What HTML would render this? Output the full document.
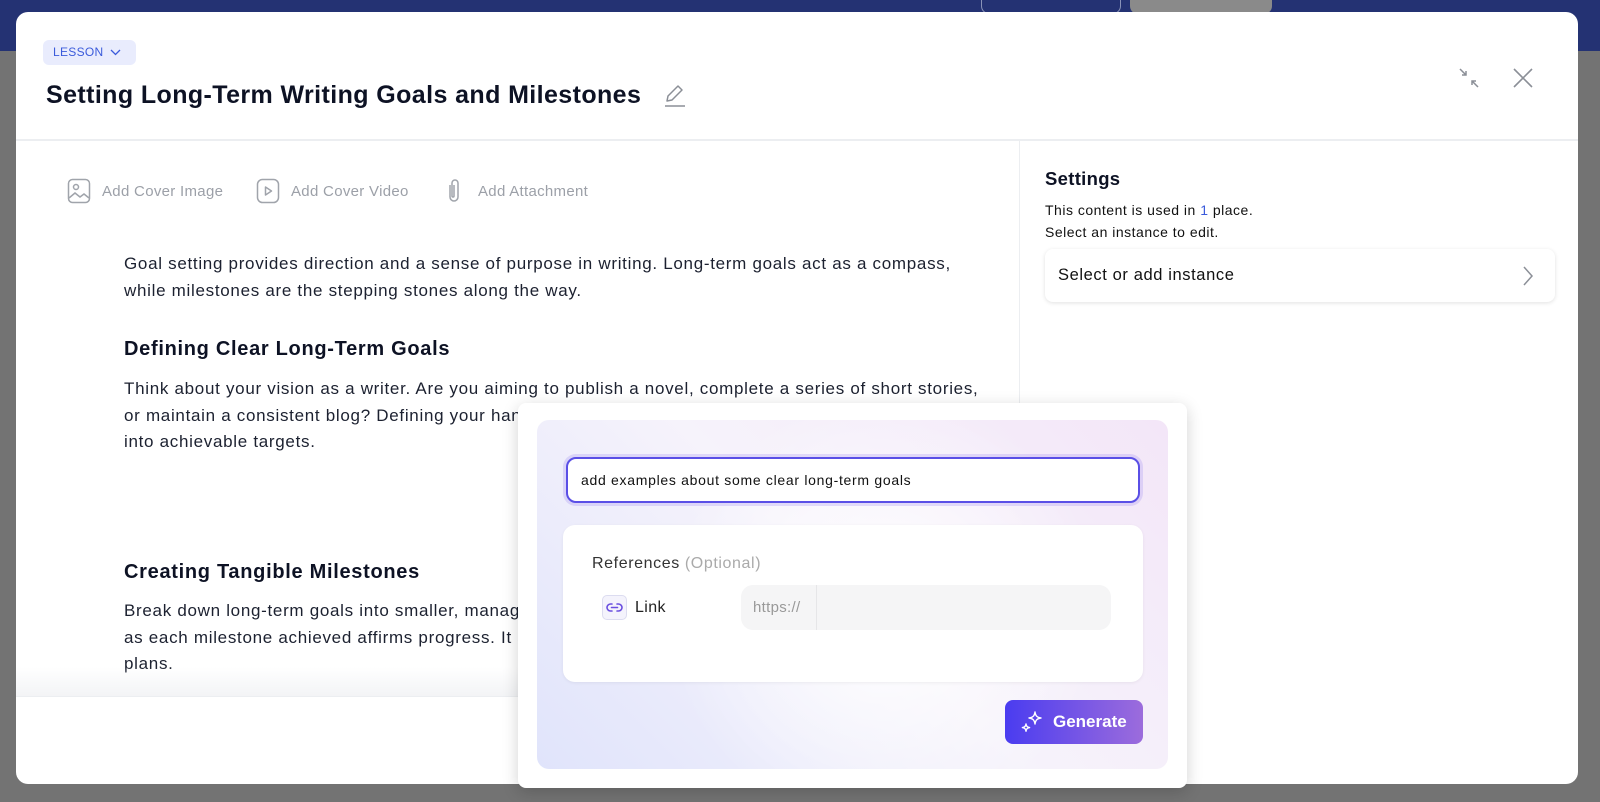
<!DOCTYPE html>
<html><head><meta charset="utf-8"><style>
*{box-sizing:border-box;margin:0;padding:0}
body{width:1600px;height:802px;overflow:hidden;position:relative;background:#6b6b6b;font-family:"Liberation Sans",sans-serif;color:#111827}
.nav{position:absolute;left:0;top:0;width:1600px;height:51px;background:#243273}
.shade{position:absolute;left:0;top:51px;width:1600px;height:751px;background:#737373}
.tab1{position:absolute;left:981px;top:-10px;width:140px;height:24px;border:1px solid #8a93b8;border-radius:8px}
.tab2{position:absolute;left:1130px;top:-10px;width:142px;height:24px;background:#8a8a8a;border-radius:8px}
.modal{position:absolute;left:16px;top:12px;width:1562px;height:772px;background:#fff;border-radius:12px;overflow:hidden}
.abs{position:absolute;white-space:nowrap}
.badge{left:27px;top:28px;width:93px;height:25px;background:#e9ecfd;border-radius:6px;color:#3b5bdb;font-size:12px;line-height:25px;padding-left:10px;letter-spacing:.3px}
.title{left:30px;top:69px;font-size:25px;font-weight:bold;color:#0d1224;letter-spacing:.4px}
.hdiv{position:absolute;left:0;top:127px;width:1562px;height:2px;background:#eceef1}
.vdiv{position:absolute;left:1003px;top:129px;width:1px;height:555px;background:#eceef1}
.cov{font-size:15px;color:#9ca0a8;top:171px;letter-spacing:.3px}
.p{font-size:17px;color:#1c2130;left:108px;line-height:26.5px;letter-spacing:.7px}
.h{font-size:20px;font-weight:bold;color:#0d1224;left:108px;letter-spacing:.7px}
.fade{position:absolute;left:0;top:655px;width:1003px;height:29px;background:linear-gradient(rgba(255,255,255,0),#f3f4f6)}
.foot{position:absolute;left:0;top:684px;width:1003px;height:1px;background:#eceef1}
.popup{position:absolute;left:518px;top:403px;width:669px;height:385px;background:#fff;border-radius:8px;box-shadow:0 4px 16px rgba(0,0,0,.18)}
.panel{position:absolute;left:19px;top:17px;width:631px;height:349px;border-radius:12px;background:radial-gradient(circle at 55% 55%,#fff 0%,rgba(255,255,255,0) 55%),linear-gradient(45deg,#e0e4fb 0%,#f6f3fb 50%,#f3e6f8 100%)}
.inp{position:absolute;left:29px;top:37px;width:574px;height:46px;background:#fff;border:2px solid #5a4fe6;border-radius:10px;box-shadow:0 0 0 3px rgba(150,130,240,.25);font-size:14px;line-height:42px;padding-left:13px;color:#111;letter-spacing:.7px}
.refs{position:absolute;left:26px;top:105px;width:580px;height:157px;background:#fff;border-radius:12px;box-shadow:0 1px 3px rgba(0,0,0,.06)}
.gen{position:absolute;left:468px;top:280px;width:138px;height:44px;border-radius:8px;background:linear-gradient(90deg,#4a3cf0,#9c6cdc);color:#fff;font-size:17px;font-weight:bold;line-height:44px;padding-left:48px}
</style></head><body>
<div class="nav"><div class="tab1"></div><div class="tab2"></div></div>
<div class="shade"></div>
<div class="modal">
  <div class="abs badge">LESSON <svg width="11" height="8" viewBox="0 0 11 8" style="margin-left:3px"><path d="M1 2l4.5 4.5L10 2" fill="none" stroke="#3b5bdb" stroke-width="1.3"/></svg></div>
  <div class="abs title">Setting Long-Term Writing Goals and Milestones</div>
  <svg class="abs" style="left:646px;top:70px" width="24" height="26" viewBox="0 0 24 26"><path d="M5 19l1-5L16 4l4 4-10 10z" fill="none" stroke="#8b8f97" stroke-width="1.5" stroke-linejoin="round"/><path d="M3 24h20" stroke="#8b8f97" stroke-width="1.5"/></svg>
  <svg class="abs" style="left:1441px;top:54px" width="24" height="24" viewBox="0 0 24 24"><path d="M3 3l6 6M9 5v4H5M21 21l-6-6M15 19v-4h4" fill="none" stroke="#8b8f97" stroke-width="1.5"/></svg>
  <svg class="abs" style="left:1496px;top:55px" width="22" height="22" viewBox="0 0 22 22"><path d="M2 2l18 18M20 2L2 20" stroke="#8b8f97" stroke-width="1.6"/></svg>
  <div class="hdiv"></div><div class="vdiv"></div>

  <svg class="abs" style="left:51px;top:166px" width="24" height="26" viewBox="0 0 24 26"><rect x="1.5" y="1.5" width="21" height="23" rx="4" fill="none" stroke="#a0a4ab" stroke-width="1.5"/><circle cx="9" cy="9" r="2.5" fill="none" stroke="#a0a4ab" stroke-width="1.5"/><path d="M2 20l6-5 5 4 4-3 5 4" fill="none" stroke="#a0a4ab" stroke-width="1.5"/></svg>
  <div class="abs cov" style="left:86px">Add Cover Image</div>
  <svg class="abs" style="left:240px;top:166px" width="24" height="26" viewBox="0 0 24 26"><rect x="1.5" y="1.5" width="21" height="23" rx="5" fill="none" stroke="#a0a4ab" stroke-width="1.5"/><path d="M9.5 9v8l6-4z" fill="none" stroke="#a0a4ab" stroke-width="1.5" stroke-linejoin="round"/></svg>
  <div class="abs cov" style="left:275px">Add Cover Video</div>
  <svg class="abs" style="left:428px;top:165px" width="20" height="28" viewBox="0 0 20 28"><path d="M6 8v12a4 4 0 008 0V6a3 3 0 00-6 0v13a1 1 0 002 0V8" fill="none" stroke="#a0a4ab" stroke-width="1.5"/></svg>
  <div class="abs cov" style="left:462px">Add Attachment</div>

  <div class="abs p" style="top:239px">Goal setting provides direction and a sense of purpose in writing. Long-term goals act as a compass,<br>while milestones are the stepping stones along the way.</div>
  <div class="abs h" style="top:326px">Defining Clear Long-Term Goals</div>
  <div class="abs p" style="top:364px">Think about your vision as a writer. Are you aiming to publish a novel, complete a series of short stories,<br>or maintain a consistent blog? Defining your hand<br>into achievable targets.</div>
  <div class="abs h" style="top:549px">Creating Tangible Milestones</div>
  <div class="abs p" style="top:586px">Break down long-term goals into smaller, manageable<br>as each milestone achieved affirms progress. It also<br>plans.</div>
  <div class="fade"></div><div class="foot"></div>

  <div class="abs" style="left:1029px;top:156px;font-size:18.5px;font-weight:bold;color:#0d1224;letter-spacing:.3px">Settings</div>
  <div class="abs" style="left:1029px;top:187px;font-size:14px;line-height:22px;color:#111;letter-spacing:.5px">This content is used in <span style="color:#3b5bdb">1</span> place.<br>Select an instance to edit.</div>
  <div class="abs" style="left:1029px;top:237px;width:510px;height:53px;border-radius:8px;box-shadow:0 1px 4px rgba(0,0,0,.12);background:#fff">
    <div class="abs" style="left:13px;top:17px;font-size:16.5px;color:#111;letter-spacing:.6px">Select or add instance</div>
    <svg class="abs" style="left:477px;top:16px" width="12" height="22" viewBox="0 0 12 22"><path d="M2 2l8 9-8 9" fill="none" stroke="#8b8f97" stroke-width="1.5"/></svg>
  </div>
</div>

<div class="popup"><div class="panel">
  <div class="inp">add examples about some clear long-term goals</div>
  <div class="refs">
    <div class="abs" style="left:29px;top:30px;font-size:16px;color:#333;letter-spacing:.6px">References <span style="color:#aaa">(Optional)</span></div>
    <div class="abs" style="left:39px;top:70px;width:25px;height:25px;border:1px solid #dcdcf0;border-radius:5px;background:#f4f3fc"><svg width="23" height="23" viewBox="0 0 23 23"><path d="M9 8H7.5a3.5 3.5 0 000 7H9M14 8h1.5a3.5 3.5 0 010 7H14M8.5 11.5h6" fill="none" stroke="#6a4fe0" stroke-width="1.6" stroke-linecap="round"/></svg></div>
    <div class="abs" style="left:72px;top:74px;font-size:16px;color:#222;letter-spacing:.4px">Link</div>
    <div class="abs" style="left:178px;top:60px;width:370px;height:45px;border-radius:12px;background:#f5f5f6">
      <div class="abs" style="left:12px;top:14px;font-size:15px;color:#999;letter-spacing:.3px">https://</div>
      <div class="abs" style="left:75px;top:0;width:1px;height:45px;background:#e6e6e8"></div>
    </div>
  </div>
  <div class="gen"><svg class="abs" style="left:14px;top:10px" width="26" height="26" viewBox="0 0 26 26"><path d="M16 2c.6 4 2 5.4 6 6-4 .6-5.4 2-6 6-.6-4-2-5.4-6-6 4-.6 5.4-2 6-6zM7 14c.4 2.4 1.2 3.2 3.6 3.6C8.2 18 7.4 18.8 7 21.2 6.6 18.8 5.8 18 3.4 17.6 5.8 17.2 6.6 16.4 7 14z" fill="none" stroke="#fff" stroke-width="1.4" stroke-linejoin="round"/></svg>Generate</div>
</div></div>
</body></html>
